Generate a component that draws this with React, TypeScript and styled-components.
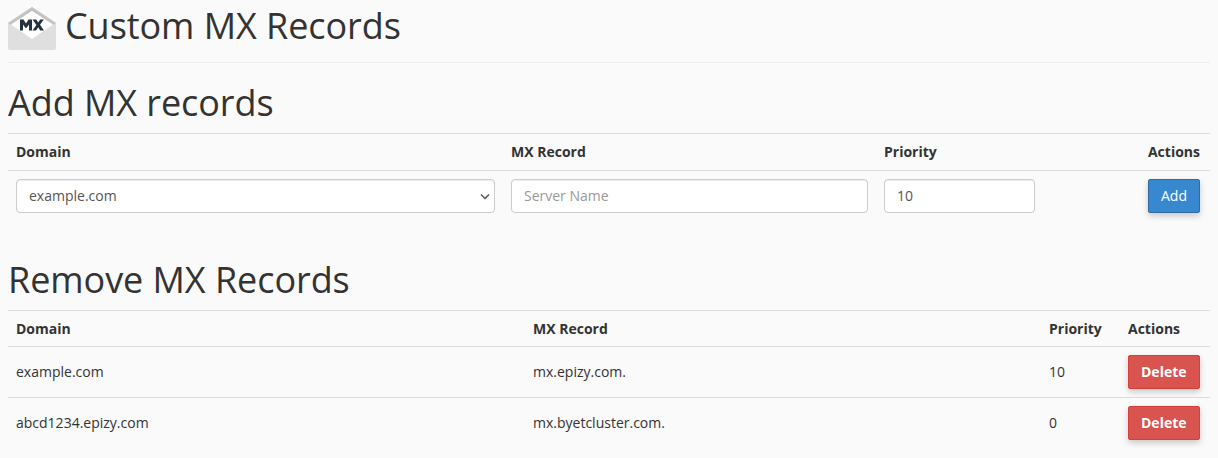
import React from "react"
import styled, { createGlobalStyle } from "styled-components"

const GlobalStyle = createGlobalStyle`
    html, body {
        margin: 0;
        padding: 0;
        background-color: #fafafa;
    }

    body {
        font-family: "Open Sans", "Noto Sans", sans-serif;
        font-size: 14px;
        line-height: 20px;
        color: #333;
    }

    * {
        box-sizing: border-box;
    }
`

const Page = styled.div`
    padding: 0 8px;
`

const PageHeader = styled.div`
    height: 63px;
    padding-top: 6px;
    border-bottom: 1px solid #eee;

    display: flex;
    flex-flow: row nowrap;
    align-items: flex-start;
    gap: 9px;
`

const PageTitle = styled.h1`
    margin: 0;
    font-size: 36px;
    font-weight: 400;
    line-height: 40px;
    letter-spacing: -0.06px;
    color: #333;
`

const SectionTitle = styled.h2<{ $top: number }>`
    margin: ${props => props.$top}px 0 10px;
    font-size: 36px;
    font-weight: 400;
    line-height: 40px;
    letter-spacing: -0.06px;
    color: #333;
`

const Table = styled.table`
    width: 100%;
    border-collapse: collapse;
    border-spacing: 0;
    table-layout: fixed;
`

const HeadCell = styled.th<{ $right?: boolean; $compact?: boolean }>`
    padding: 8px;
    padding-right: ${props => props.$right ? 10 : 8}px;
    padding-bottom: ${props => props.$compact ? 7 : 8}px;
    border-top: 1px solid #ddd;
    border-bottom: 1px solid #ddd;
    font-weight: 700;
    line-height: 20px;
    text-align: ${props => props.$right ? "right" : "left"};
`

const Cell = styled.td<{ $right?: boolean }>`
    padding: 8px;
    padding-right: ${props => props.$right ? 10 : 8}px;
    border-top: 1px solid #ddd;
    line-height: 20px;
    vertical-align: middle;
    text-align: ${props => props.$right ? "right" : "left"};
`

const fieldStyles = `
    display: block;
    height: 34px;
    padding: 6px 12px;
    border: 1px solid #ccc;
    border-radius: 4px;
    background-color: #fff;
    box-shadow: inset 0 1px 1px rgba(0, 0, 0, .075);
    font-family: inherit;
    font-size: 14px;
    line-height: 20px;
    color: #555;
`

const SelectBox = styled.div`
    ${fieldStyles}
    width: 100%;
    position: relative;

    svg {
        position: absolute;
        top: 13px;
        right: 4px;
    }
`

const TextInput = styled.input<{ $width?: number }>`
    ${fieldStyles}
    padding: 5px 12px 7px;
    width: ${props => props.$width ? `${props.$width}px` : "100%"};

    &::placeholder {
        color: #999;
        opacity: 1;
    }
`

const Button = styled.button<{ $variant: "primary" | "danger" }>`
    display: inline-block;
    padding: 6px 12px;
    border: 1px solid ${props => props.$variant === "primary" ? "#2e6da4" : "#d43f3a"};
    border-radius: 2px;
    background-color: ${props => props.$variant === "primary" ? "#3888d0" : "#d9534f"};
    box-shadow: 0 3px 6px rgba(0, 0, 0, .2);
    font-family: inherit;
    font-size: 14px;
    font-weight: ${props => props.$variant === "primary" ? 400 : 700};
    line-height: 20px;
    color: #fff;
    vertical-align: middle;
`

const MxIcon = () => (
    <svg width="48" height="44" viewBox="0 0 48 44" style={{ flexShrink: 0, marginTop: 1 }}>
        <path d="M0 16 L24 0 L48 16 V41 a2 2 0 0 1 -2 2 H2 a2 2 0 0 1 -2 -2 Z" fill="#dfdfdf" />
        <path d="M0 16 L24 0 L48 16 L45 18 L24 4 L3 18 Z" fill="#c4c4c4" />
        <path d="M3 17.5 L24 4 L45 17.5 L24 32 Z" fill="#fff" />
        <path
            d="M12 23.5 V12.5 H15.5 L18 16.5 L20.5 12.5 H24 V23.5 H21 V17.5 L18.4 21 H17.6 L15 17.5 V23.5 Z M24.5 12.5 H28.2 L30.2 15.6 L32.2 12.5 H35.8 L32 17.8 L36 23.5 H32.3 L30.2 20.2 L28 23.5 H24.5 L28.4 17.9 Z"
            fill="#24323f"
        />
    </svg>
)

const SelectChevron = () => (
    <svg width="10" height="7" viewBox="0 0 10 7">
        <path d="M1 1.5 L5 5.5 L9 1.5" fill="none" stroke="#555" strokeWidth="1.5" />
    </svg>
)

const records = [
    { domain: "example.com", server: "mx.epizy.com.", priority: 10 },
    { domain: "abcd1234.epizy.com", server: "mx.byetcluster.com.", priority: 0 }
]

export default function App() {
    return (
        <Page>
            <GlobalStyle />
            <PageHeader>
                <MxIcon />
                <PageTitle>Custom MX Records</PageTitle>
            </PageHeader>

            <SectionTitle $top={20}>Add MX records</SectionTitle>
            <Table>
                <colgroup>
                    <col width="495" />
                    <col width="373" />
                    <col width="167" />
                    <col width="167" />
                </colgroup>
                <thead>
                    <tr>
                        <HeadCell>Domain</HeadCell>
                        <HeadCell>MX Record</HeadCell>
                        <HeadCell>Priority</HeadCell>
                        <HeadCell $right>Actions</HeadCell>
                    </tr>
                </thead>
                <tbody>
                    <tr>
                        <Cell>
                            <SelectBox>
                                example.com
                                <SelectChevron />
                            </SelectBox>
                        </Cell>
                        <Cell><TextInput placeholder="Server Name" /></Cell>
                        <Cell><TextInput $width={151} defaultValue="10" /></Cell>
                        <Cell $right><Button $variant="primary">Add</Button></Cell>
                    </tr>
                </tbody>
            </Table>

            <SectionTitle $top={39}>Remove MX Records</SectionTitle>
            <Table>
                <colgroup>
                    <col width="517" />
                    <col width="516" />
                    <col width="79" />
                    <col width="90" />
                </colgroup>
                <thead>
                    <tr>
                        <HeadCell $compact>Domain</HeadCell>
                        <HeadCell $compact>MX Record</HeadCell>
                        <HeadCell $compact>Priority</HeadCell>
                        <HeadCell $compact>Actions</HeadCell>
                    </tr>
                </thead>
                <tbody>
                    {records.map(record => (
                        <tr key={record.domain}>
                            <Cell>{record.domain}</Cell>
                            <Cell>{record.server}</Cell>
                            <Cell>{record.priority}</Cell>
                            <Cell><Button $variant="danger">Delete</Button></Cell>
                        </tr>
                    ))}
                </tbody>
            </Table>
        </Page>
    )
}
